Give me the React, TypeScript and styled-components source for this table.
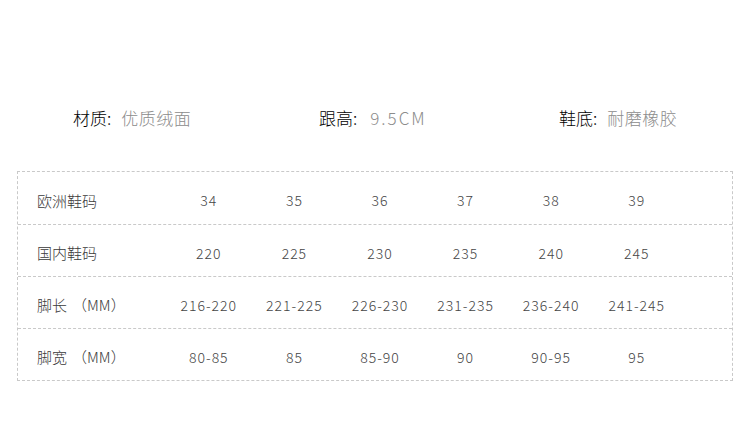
import React from "react";
import styled, { createGlobalStyle } from "styled-components";

const Global = createGlobalStyle`
  html, body { margin: 0; padding: 0; background: #fff; }
  body { font-family: "Noto Sans CJK SC", "Noto Sans", sans-serif; }
`;

const Page = styled.div`
  width: 750px;
  height: 423px;
  background: #fff;
  box-sizing: border-box;
  padding-top: 106px;
  overflow: hidden;
`;

const Specs = styled.div`
  display: grid;
  grid-template-columns: 246px 240px auto;
  padding-left: 73px;
  height: 24px;
  align-items: center;
`;

const Spec = styled.div`
  display: flex;
  align-items: center;
  gap: 10px;
  font-size: 17px;
  line-height: 24px;
  white-space: nowrap;
`;

const SpecKey = styled.span`
  color: #000;
  font-weight: 300;
`;

const SpecVal = styled.span`
  color: #8c8c8c;
  font-weight: 300;
  letter-spacing: 0.5px;
`;

const SpecNum = styled(SpecVal)`
  margin-left: 3px;
  letter-spacing: 2px;
`;

const Table = styled.div`
  margin: 41px 0 0 17px;
  width: 716px;
  box-sizing: border-box;
  border: 1px dashed #c9c9c9;
`;

const Row = styled.div<{ $first?: boolean }>`
  display: grid;
  grid-template-columns: 148px repeat(6, 85.6px) 1fr;
  height: 52px;
  align-items: center;
  border-top: ${(p) => (p.$first ? "none" : "1px dashed #c9c9c9")};
  padding-top: 4px;
  box-sizing: border-box;
`;

const Label = styled.div`
  padding-left: 19px;
  font-size: 15px;
  color: #3a3a3a;
  font-weight: 300;
  white-space: nowrap;
`;

const Unit = styled.span`
  margin-left: 5px;
`;

const Cell = styled.div`
  text-align: center;
  font-size: 14px;
  color: #444;
  font-weight: 300;
  letter-spacing: 1px;
  white-space: nowrap;
`;

const rows: [string, string, string[]][] = [
  ["欧洲鞋码", "", ["34", "35", "36", "37", "38", "39"]],
  ["国内鞋码", "", ["220", "225", "230", "235", "240", "245"]],
  ["脚长", "（MM）", ["216-220", "221-225", "226-230", "231-235", "236-240", "241-245"]],
  ["脚宽", "（MM）", ["80-85", "85", "85-90", "90", "90-95", "95"]],
];

export default function App() {
  return (
    <>
      <Global />
      <Page>
        <Specs>
          <Spec>
            <SpecKey>材质:</SpecKey>
            <SpecVal>优质绒面</SpecVal>
          </Spec>
          <Spec>
            <SpecKey>跟高:</SpecKey>
            <SpecNum>9.5CM</SpecNum>
          </Spec>
          <Spec>
            <SpecKey>鞋底:</SpecKey>
            <SpecVal>耐磨橡胶</SpecVal>
          </Spec>
        </Specs>
        <Table>
          {rows.map(([label, unit, vals], i) => (
            <Row key={label} $first={i === 0}>
              <Label>
                {label}
                {unit && <Unit>{unit}</Unit>}
              </Label>
              {vals.map((v, j) => (
                <Cell key={j}>{v}</Cell>
              ))}
              <div />
            </Row>
          ))}
        </Table>
      </Page>
    </>
  );
}
